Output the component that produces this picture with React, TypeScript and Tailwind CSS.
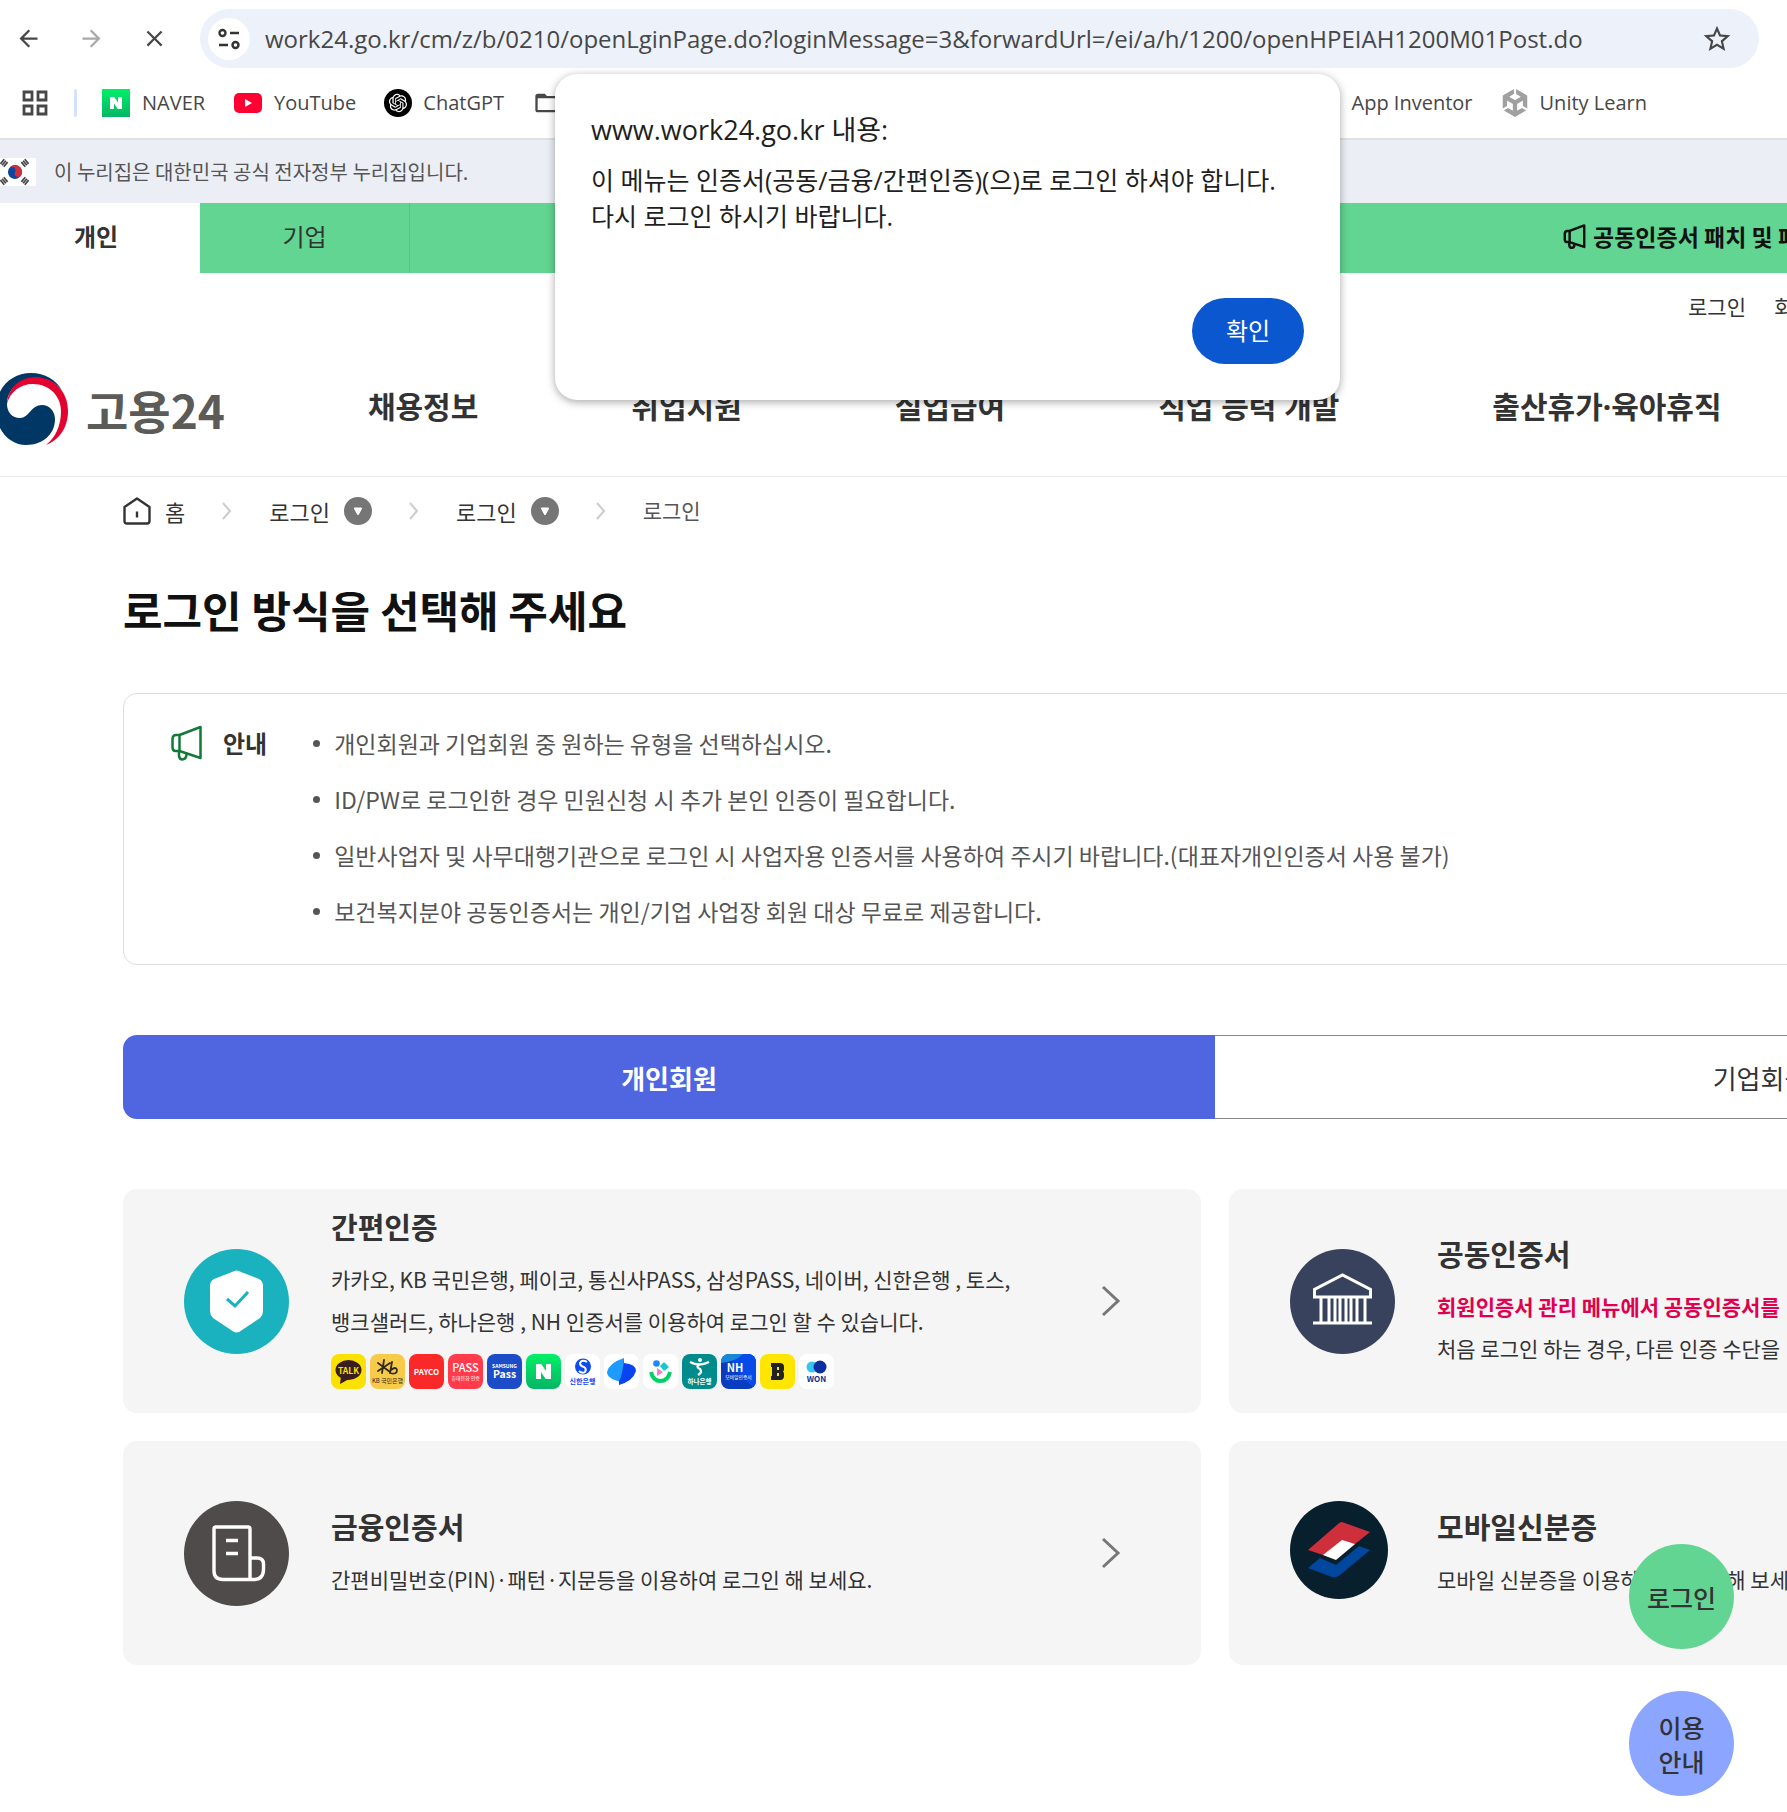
import type { ReactNode } from "react";
import clsx from "clsx";
import { MdArrowBack, MdArrowForward, MdClose, MdFolderOpen, MdStarBorder } from "react-icons/md";
import { FaUnity } from "react-icons/fa6";
import { RiOpenaiFill } from "react-icons/ri";

const notices = [
    "개인회원과 기업회원 중 원하는 유형을 선택하십시오.",
    "ID/PW로 로그인한 경우 민원신청 시 추가 본인 인증이 필요합니다.",
    "일반사업자 및 사무대행기관으로 로그인 시 사업자용 인증서를 사용하여 주시기 바랍니다.(대표자개인인증서 사용 불가)",
    "보건복지분야 공동인증서는 개인/기업 사업장 회원 대상 무료로 제공합니다.",
];

const menus = ["채용정보", "취업지원", "실업급여", "직업 능력 개발", "출산휴가·육아휴직"];

function Megaphone({ className }: { className?: string }) {
    return (
        <svg viewBox="0 0 32 36" className={className} fill="none" stroke="currentColor" strokeLinejoin="round" strokeLinecap="round">
            <path d="M9 10 L30 2 V33 L9 26 Z" />
            <path d="M9 10 H5 Q2 10.500 2 14 V22 Q2 26 5 26 H9" />
            <path d="M8.500 26.500 V31 Q9 34.500 12 34.500 Q16 34 16 29" />
        </svg>
    );
}

function Flag() {
    const bars = [[4, 5, -50], [25, 5, 50], [4, 23, 50], [25, 23, -50]];
    return (
        <svg viewBox="0 0 36 28" className="h-7 w-9 shrink-0">
            <rect width="36" height="28" fill="#fff" />
            <g transform="rotate(25 15 14)">
                <circle cx="15" cy="14" r="7" fill="#0a47a0" />
                <path d="M8 14 A7 7 0 0 1 22 14 A3.500 3.500 0 0 1 15 14 A3.500 3.500 0 0 0 8 14" fill="#d0303c" />
            </g>
            {bars.map(([x, y, r]) => (
                <g key={`${x}-${y}`} transform={`translate(${x} ${y}) rotate(${r})`} stroke="#444" strokeWidth="1.700">
                    <path d="M-3 -2.200 H3 M-3 0 H3 M-3 2.200 H3" />
                </g>
            ))}
        </svg>
    );
}

function NaverMark({ className }: { className?: string }) {
    return (
        <svg viewBox="0 0 28 28" className={className}>
            <defs>
                <linearGradient id="naver" x1="0" y1="0" x2="0" y2="1">
                    <stop offset="0" stopColor="#00f068" />
                    <stop offset="1" stopColor="#06b565" />
                </linearGradient>
            </defs>
            <rect width="28" height="28" fill="url(#naver)" />
            <path d="M8 8 H12.200 L16 13.600 V8 H20 V20 H15.800 L12 14.400 V20 H8 Z" fill="#fff" />
        </svg>
    );
}

function BrowserBar() {
    return (
        <header className="border-b-2 border-[#dfe1e1] bg-white font-['Open_Sans','Noto_Sans_CJK_KR',sans-serif] text-[#474747]">
            <div className="flex items-center pt-[9px] pr-7 pl-[15px]">
                <button aria-label="뒤로" className="text-[#474747]"><MdArrowBack size={27} /></button>
                <button aria-label="앞으로" className="ml-9 text-[#a9a9a9]"><MdArrowForward size={27} /></button>
                <button aria-label="중지" className="ml-9"><MdClose size={27} /></button>
                <div className="ml-8 flex h-[59px] min-w-0 grow items-center rounded-full bg-[#ecf1fa] pr-[26px] pl-2">
                    <button aria-label="사이트 정보" className="flex size-[42px] shrink-0 items-center justify-center rounded-full bg-white">
                        <svg viewBox="0 0 22 22" className="size-[22px]" fill="none" stroke="#333" strokeWidth="2.400">
                            <circle cx="4.500" cy="5" r="3" />
                            <path d="M12 5 H21 M1 17 H10" />
                            <circle cx="17.500" cy="17" r="3" />
                        </svg>
                    </button>
                    <input
                        aria-label="주소창"
                        className="ml-[15px] min-w-0 grow bg-transparent text-2xl outline-none"
                        defaultValue="work24.go.kr/cm/z/b/0210/openLginPage.do?loginMessage=3&forwardUrl=/ei/a/h/1200/openHPEIAH1200M01Post.do"
                    />
                    <button aria-label="북마크"><MdStarBorder size={32} /></button>
                </div>
            </div>
            <nav className="flex h-[70px] items-center pl-[22px] text-xl whitespace-nowrap">
                <svg viewBox="0 0 26 26" className="size-[26px]" fill="none" stroke="#474747" strokeWidth="2.800">
                    <path d="M2 2 H10 V10 H2 Z M16 2 H24 V10 H16 Z M2 16 H10 V24 H2 Z M16 16 H24 V24 H16 Z" />
                </svg>
                <span className="ml-[26px] h-7 w-[3px] rounded-full bg-[#d3e3fd]" />
                <a href="#naver" className="ml-[25px] flex items-center gap-3"><NaverMark className="size-7" />NAVER</a>
                <a href="#youtube" className="ml-[29px] flex items-center gap-3">
                    <svg viewBox="0 0 28 28" className="size-7">
                        <rect y="4" width="28" height="20" rx="5" fill="#ff0033" />
                        <path d="M11 10 L18 14 L11 18 Z" fill="#fff" />
                    </svg>
                    YouTube
                </a>
                <a href="#chatgpt" className="ml-7 flex items-center gap-[11px]">
                    <span className="flex size-7 items-center justify-center rounded-full bg-black text-white"><RiOpenaiFill size={22} /></span>
                    ChatGPT
                </a>
                <MdFolderOpen size={28} className="ml-[29px] shrink-0" />
                <a href="#appinventor" className="ml-auto">App Inventor</a>
                <a href="#unity" className="mr-[140px] ml-7 flex items-center gap-[11px]"><FaUnity size={28} color="#a0a0a0" />Unity Learn</a>
            </nav>
        </header>
    );
}

function AlertDialog() {
    return (
        <div role="alertdialog" aria-labelledby="alert-title" className="absolute top-[74px] left-[555px] flex h-[326px] w-[785px] flex-col rounded-[22px] bg-white px-9 pt-9 pb-9 font-['Open_Sans','Noto_Sans_CJK_KR',sans-serif] text-[#1f1f1f] shadow-[0_2px_8px_rgba(0,0,0,0.35)]">
            <h2 id="alert-title" className="text-[27px] leading-10">www.work24.go.kr 내용:</h2>
            <p className="mt-3 text-[25px] leading-9 whitespace-nowrap">
                이 메뉴는 인증서(공동/금융/간편인증)(으)로 로그인 하셔야 합니다.<br />
                다시 로그인 하시기 바랍니다.
            </p>
            <button className="mt-auto h-[66px] w-28 self-end rounded-full bg-[#0b57d0] text-2xl text-white">확인</button>
        </div>
    );
}

function Taegeuk() {
    return (
        <svg viewBox="0 0 72 72" className="-ml-1 size-[72px] shrink-0">
            <path d="M35 0 C16 0 0 14 0 37 C0 59 15 72 30 72 C47 72 59 61 59 46 C59 38 53 32 46 32 C35 32 33 45 24 45 C16 45 11 39 11 31 C11 18 22 6 38 5 C50 4 60 10 66 17 C60 7 49 0 35 0 Z" fill="#003764" />
            <path d="M11 31 C12 15 24 4 40 4 C58 5 72 18 72 38 C72 55 63 67 50 72 C60 64 65 52 65 38 C65 22 52 11 37 11 C24 11 14 19 11 31 Z" fill="#e4032e" />
        </svg>
    );
}

function SiteHeader() {
    return (
        <header>
            <div className="flex h-[63px] items-center gap-[18px] bg-[#ebeff5] text-xl text-[#555]">
                <Flag />
                이 누리집은 대한민국 공식 전자정부 누리집입니다.
            </div>
            <div className="flex h-[70px] items-stretch bg-[#62d592] text-2xl text-[#333]">
                <a href="#personal" className="flex w-[200px] items-center justify-center bg-white pr-2 pb-1 font-bold">개인</a>
                <a href="#company" className="flex w-[210px] items-center justify-center border-r border-[#56c485] pb-1">기업</a>
                <a href="#notice" className="ml-auto flex w-[867px] items-center gap-[7px] pb-1 text-[23px] font-bold text-[#111]">
                    <Megaphone className="h-[25px] w-[23px] stroke-[3.5]" />
                    공동인증서 패치 및 패치
                </a>
            </div>
            <div className="flex h-[68px] items-center justify-end gap-7 text-[21px] text-[#333]">
                <a href="#login">로그인</a>
                <a href="#join" className="w-[656px]">회원가입</a>
            </div>
            <div className="flex h-[136px] items-center border-b border-[#e8e8e8]">
                <a href="#home" className="flex items-center gap-[18px] text-[46px] leading-none font-bold text-[#5c5b57]">
                    <Taegeuk />
                    고용24
                </a>
                <nav className="ml-[143px] flex gap-[153px] pb-1 font-['Noto_Sans','Noto_Sans_CJK_KR',sans-serif] text-3xl font-bold whitespace-nowrap text-[#333]">
                    {menus.map((menu) => <a key={menu} href="#menu">{menu}</a>)}
                </nav>
            </div>
        </header>
    );
}

function CrumbArrow() {
    return (
        <svg viewBox="0 0 12 20" className="h-5 w-3" fill="none" stroke="#ccc" strokeWidth="2">
            <path d="M2 2 L9 10 L2 18" />
        </svg>
    );
}

function CrumbMenu() {
    return (
        <button className="flex items-center gap-[14px]">
            로그인
            <svg viewBox="0 0 28 28" className="size-7">
                <circle cx="14" cy="14" r="14" fill="#767676" />
                <path d="M11 11.500 H17 L14 17 Z" fill="#fff" stroke="#fff" strokeWidth="2" strokeLinejoin="round" />
            </svg>
        </button>
    );
}

function Breadcrumb() {
    return (
        <nav className="flex h-[68px] items-center gap-9 text-[22px] text-[#333]">
            <a href="#home" className="flex items-center gap-[14px]">
                <svg viewBox="0 0 28 28" className="size-7" fill="none" stroke="#333" strokeWidth="2.400" strokeLinejoin="round">
                    <path d="M1.500 10 L14 1.500 L26.500 10 V24 Q26.500 26.500 24 26.500 H4 Q1.500 26.500 1.500 24 Z" />
                    <path d="M14 14.500 V20.500" />
                </svg>
                홈
            </a>
            <CrumbArrow />
            <CrumbMenu />
            <CrumbArrow />
            <CrumbMenu />
            <CrumbArrow />
            <span className="text-[21px] text-[#555]">로그인</span>
        </nav>
    );
}

function Tile({ color, children }: { color: string; children: ReactNode }) {
    return (
        <svg viewBox="0 0 35 35" className="size-[35px] rounded-lg font-['Noto_Sans_CJK_KR',sans-serif]" textAnchor="middle">
            <rect width="35" height="35" fill={color} />
            {children}
        </svg>
    );
}

function PartnerIcons() {
    return (
        <div className="mt-3 mb-2 flex gap-1">
            <Tile color="#fae100">
                <ellipse cx="17.500" cy="16" rx="13" ry="10" fill="#3a1d1d" />
                <path d="M10 22 L9 30 L18 25 Z" fill="#3a1d1d" />
                <text x="17.500" y="19.500" fontSize="8.500" fontWeight="700" fill="#fae100">TALK</text>
            </Tile>
            <Tile color="#f8ca4a">
                <path d="M8 9 L20 18 M14 6 L12 19 M8 17 L20 9 M22 8 L20 19 Q27 21 27 16 Q26 12 21 16" fill="none" stroke="#332a20" strokeWidth="1.800" strokeLinecap="round" />
                <text x="17.500" y="29" fontSize="6" fill="#332a20">KB 국민은행</text>
            </Tile>
            <Tile color="#fa2828">
                <text x="17.500" y="20.500" fontSize="8" fontWeight="700" fill="#fff">PAYCO</text>
            </Tile>
            <Tile color="#ff3b4c">
                <text x="17.500" y="18" fontSize="11" fontWeight="500" fill="#fff">PASS</text>
                <text x="17.500" y="26" fontSize="5" fill="#fff">휴대전화 인증</text>
            </Tile>
            <Tile color="#1d4cc8">
                <text x="17.500" y="14" fontSize="5" fontWeight="700" fill="#fff">SAMSUNG</text>
                <text x="17.500" y="24" fontSize="10.500" fontWeight="700" fill="#fff">Pass</text>
            </Tile>
            <NaverMark className="size-[35px] rounded-lg" />
            <Tile color="#fff">
                <circle cx="18" cy="12.500" r="8" fill="#0e4bef" />
                <path d="M22 8 Q17 5 15 9 Q15 12 19 13 Q22 15 20 18 Q17 20 14 17" fill="none" stroke="#fff" strokeWidth="2" />
                <text x="17.500" y="29.500" fontSize="7" fontWeight="700" fill="#0e4bef">신한은행</text>
            </Tile>
            <Tile color="#fff">
                <path d="M20 4 V9 L18 28 Q3 25 3 18 Q5 9 20 4" fill="#1e9bff" />
                <path d="M20 4 V9 Q32 10 32 17 Q29 27 15 31 V27 Q19 20 20 4" fill="#0a44f0" />
            </Tile>
            <Tile color="#fff">
                <circle cx="13.500" cy="9.500" r="3.300" fill="#1989ff" />
                <path d="M21 8 L26 13 L21 17 L17 12 Z" fill="#18c8c8" />
                <path d="M14 14 L20 18 L14 22 Z" fill="#ff79c8" />
                <path d="M8 18 Q10 27 17.500 27 Q25 27 27 18" fill="none" stroke="#05d066" strokeWidth="4" />
            </Tile>
            <Tile color="#008c8c">
                <circle cx="18" cy="6" r="2" fill="#fff" />
                <path d="M8 8 Q17 13 27 8 M18 10 Q13 13 18 15 Q21 18 16 21" fill="none" stroke="#fff" strokeWidth="2.400" />
                <text x="17.500" y="29.500" fontSize="6.500" fontWeight="700" fill="#fff">하나은행</text>
            </Tile>
            <Tile color="#0a3cc0">
                <path d="M8 0 H35 V35 Q14 20 8 0" fill="#064ae8" />
                <path d="M0 0 H22 Q14 8 0 9 Z" fill="#1788d8" />
                <text x="14" y="17.500" fontSize="11" fontWeight="700" fill="#fff">NH</text>
                <text x="17.500" y="24.500" fontSize="4.800" fill="#fff">모바일인증서</text>
            </Tile>
            <Tile color="#ffe600">
                <path d="M11 9 H20 Q24 9 24 13 V15 Q24 17 23 17.500 Q24 18 24 20 V22 Q24 26 20 26 H11 V22 H12 V13 H11 Z M17 13 V16 H19 V13 Z M17 19 V22 H19 V19 Z" fill="#222" fillRule="evenodd" />
            </Tile>
            <Tile color="#fff">
                <circle cx="13" cy="13" r="5.500" fill="#35c5f0" />
                <circle cx="21" cy="13" r="6.500" fill="#0c2fa0" />
                <text x="17.500" y="28" fontSize="8" fontWeight="700" fill="#0c2f90">WON</text>
            </Tile>
        </div>
    );
}

function ShieldIcon() {
    return (
        <svg viewBox="0 0 105 105" className="size-[105px]">
            <circle cx="52.500" cy="52.500" r="52.500" fill="#1ab2be" />
            <path d="M48 23 Q52.500 20 57 23 L75 30 Q79 32 79 37 V62 Q79 66 76 69 L58 81 Q52.500 86 47 81 L29 69 Q26 66 26 62 V37 Q26 32 30 30 Z" fill="#fff" />
            <path d="M43 50 L51 57 L64 43" fill="none" stroke="#1ab2be" strokeWidth="3" />
        </svg>
    );
}

function BankIcon() {
    return (
        <svg viewBox="0 0 105 105" className="size-[105px]">
            <circle cx="52.500" cy="52.500" r="52.500" fill="#38425d" />
            <path d="M24.500 48 V40.500 L52.500 26 L80.500 40.500 V48 Z M23 74 H82 M31 48 V73 M39 48 V73 M45 48 V73 M50 48 V73 M56 48 V73 M61 48 V73 M67 48 V73 M75 48 V73" fill="none" stroke="#fff" strokeWidth="3" />
        </svg>
    );
}

function ReceiptIcon() {
    return (
        <svg viewBox="0 0 105 105" className="size-[105px]">
            <circle cx="52.500" cy="52.500" r="52.500" fill="#4f4b4a" />
            <g fill="none" stroke="#fff" strokeWidth="3.400" strokeLinejoin="round">
                <path d="M66 78.500 V28 Q66 26 64 26 H32 Q30 26 30 28 V70 Q30 78.500 39 78.500 H71 Q79.500 78 79.500 68 V63 Q79.500 57 73 57 H66" />
                <path d="M42 39.500 H54 M42 52.500 H54" />
            </g>
        </svg>
    );
}

function MobileIdIcon() {
    return (
        <svg viewBox="0 0 98 98" className="size-[98px] self-start">
            <circle cx="49" cy="49" r="49" fill="#081f2d" />
            <path d="M52 21 L80 31 L49 56 Q46 59 42 57 L18 49 L48 23 Q50 21 52 21 Z" fill="#cf2f3b" />
            <path d="M52 39 L65 43 L46 59 L33 54 Z" fill="#fff" />
            <path d="M30 57 L18 67 L42 76 Q46 77 50 74 L80 49 L69 45 L46 64 Z" fill="#00479d" />
        </svg>
    );
}

type CardProps = { icon: ReactNode; title: string; children: ReactNode; arrow?: boolean; last?: ReactNode };

function LoginCard({ icon, title, children, arrow, last }: CardProps) {
    return (
        <a href="#auth" className="flex h-56 items-center rounded-[14px] bg-[#f5f5f5] pr-20 pl-[61px] text-[#333]">
            <span className="flex size-[105px] shrink-0">{icon}</span>
            <div className="ml-[42px] grow whitespace-nowrap">
                <h3 className="mb-3 text-[29px] leading-10 font-bold">{title}</h3>
                <p className="text-[21px] leading-[42px]">{children}</p>
                {last}
            </div>
            {arrow && (
                <svg viewBox="0 0 20 32" className="h-8 w-5 shrink-0" fill="none" stroke="#777" strokeWidth="3">
                    <path d="M2 2 L17 16 L2 30" />
                </svg>
            )}
        </a>
    );
}

function FloatingButton({ className, children }: { className: string; children: ReactNode }) {
    return (
        <button className={clsx("flex size-[105px] items-center justify-center rounded-full text-[25px] leading-[34px] font-medium text-[#333]", className)}>
            {children}
        </button>
    );
}

export default function App() {
    return (
        <div className="relative w-full overflow-hidden bg-white pb-[147px] font-['Noto_Sans_CJK_KR',sans-serif]">
            <BrowserBar />
            <div className="min-w-[2430px]">
                <SiteHeader />
                <main className="px-[123px]">
                    <Breadcrumb />
                    <h1 className="mt-8 text-[43px] leading-[64px] font-bold text-[#111]">로그인 방식을 선택해 주세요</h1>
                    <section className="mt-[52px] flex items-start rounded-[14px] border border-[#ddd] pt-[21px] pb-[25px] pl-[46px]">
                        <div className="flex h-14 items-center gap-5 text-2xl font-bold text-[#333]">
                            <Megaphone className="h-9 w-[33px] stroke-[2.5] text-[#127a38]" />
                            안내
                        </div>
                        <ul className="ml-[46px] text-[23px] leading-[56px] text-[#555]">
                            {notices.map((notice) => (
                                <li key={notice} className="flex items-center gap-[14px]">
                                    <span className="size-[7px] rounded-full bg-[#555]" />
                                    {notice}
                                </li>
                            ))}
                        </ul>
                    </section>
                    <div role="tablist" className="mt-[70px] flex h-21 text-[26px]">
                        <button role="tab" aria-selected="true" className="w-1/2 rounded-l-[14px] bg-[#4f66e0] font-bold text-white">개인회원</button>
                        <button role="tab" aria-selected="false" className="w-1/2 rounded-r-[14px] border border-l-0 border-[#888] text-[#333]">기업회원</button>
                    </div>
                    <div className="mt-[70px] grid grid-cols-2 gap-7">
                        <LoginCard icon={<ShieldIcon />} title="간편인증" arrow last={<PartnerIcons />}>
                            카카오, KB 국민은행, 페이코, 통신사PASS, 삼성PASS, 네이버, 신한은행 , 토스,<br />
                            뱅크샐러드, 하나은행 , NH 인증서를 이용하여 로그인 할 수 있습니다.
                        </LoginCard>
                        <LoginCard icon={<BankIcon />} title="공동인증서">
                            <strong className="font-bold text-[#e0004d]">회원인증서 관리 메뉴에서 공동인증서를</strong><br />
                            처음 로그인 하는 경우, 다른 인증 수단을
                        </LoginCard>
                        <LoginCard icon={<ReceiptIcon />} title="금융인증서" arrow>
                            간편비밀번호(PIN)·패턴·지문등을 이용하여 로그인 해 보세요.
                        </LoginCard>
                        <LoginCard icon={<MobileIdIcon />} title="모바일신분증">
                            모바일 신분증을 이용하여 로그인 해 보세요.
                        </LoginCard>
                    </div>
                </main>
            </div>
            <div className="absolute right-[53px] bottom-4 flex flex-col gap-[42px]">
                <FloatingButton className="bg-[#62d592]">로그인</FloatingButton>
                <FloatingButton className="bg-[#8ca5ff]">이용<br />안내</FloatingButton>
            </div>
            <AlertDialog />
        </div>
    );
}
